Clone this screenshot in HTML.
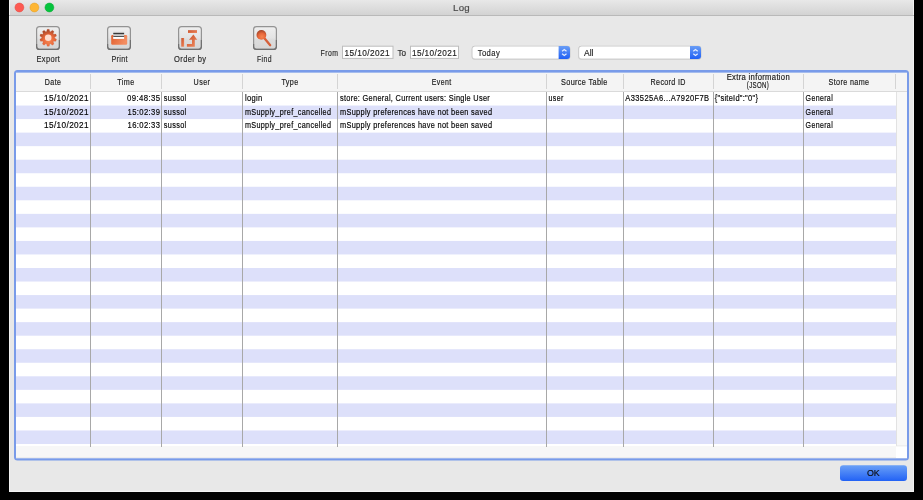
<!DOCTYPE html>
<html><head><meta charset="utf-8"><title>Log</title>
<style>
html,body{margin:0;padding:0;background:#000;width:923px;height:500px;overflow:hidden}
svg{display:block;will-change:transform}
text{font-family:"Liberation Sans",sans-serif;white-space:pre}
</style></head><body>
<svg width="923" height="500" viewBox="0 0 923 500">
<defs>
<linearGradient id="tb" x1="0" y1="0" x2="0" y2="1"><stop offset="0" stop-color="#e8e8e8"/><stop offset="1" stop-color="#d3d3d3"/></linearGradient>
<linearGradient id="ib" x1="0" y1="0" x2="0" y2="1"><stop offset="0" stop-color="#efefef"/><stop offset="0.5" stop-color="#e4e4e4"/><stop offset="0.58" stop-color="#dcdcdc"/><stop offset="1" stop-color="#d6d6d6"/></linearGradient>
<linearGradient id="og" x1="0" y1="0" x2="1" y2="1"><stop offset="0" stop-color="#c9502a"/><stop offset="1" stop-color="#f08a5e"/></linearGradient>
<radialGradient id="gg" cx="0.55" cy="0.7" r="0.65"><stop offset="0" stop-color="#f58450"/><stop offset="0.55" stop-color="#e8683b"/><stop offset="1" stop-color="#a9482a"/></radialGradient>
<linearGradient id="pt" x1="0" y1="0" x2="1" y2="0.3"><stop offset="0" stop-color="#e2602f"/><stop offset="1" stop-color="#f38d61"/></linearGradient>
<linearGradient id="pp" x1="0" y1="0" x2="0" y2="1"><stop offset="0" stop-color="#e6e6e6"/><stop offset="0.3" stop-color="#b8b8b8"/><stop offset="0.6" stop-color="#cfcfcf"/><stop offset="1" stop-color="#dddddd"/></linearGradient>
<linearGradient id="blue" x1="0" y1="0" x2="0" y2="1"><stop offset="0" stop-color="#6a9ef6"/><stop offset="1" stop-color="#1f5ff5"/></linearGradient>
<linearGradient id="okg" x1="0" y1="0" x2="0" y2="1"><stop offset="0" stop-color="#6aa0f7"/><stop offset="1" stop-color="#2262f5"/></linearGradient>
</defs>
<rect width="923" height="500" fill="#000"/>
<rect x="9" y="0" width="905" height="492" fill="#f2f2f2"/>
<rect x="10" y="0" width="903" height="491" fill="#e8e8e8"/>
<rect x="10" y="0" width="903" height="15" fill="url(#tb)"/>
<rect x="9" y="15" width="905" height="1" fill="#b9b9b9"/>
<circle cx="19.4" cy="7.5" r="4.45" fill="#fd5a52" stroke="#e2463f" stroke-width="0.5"/>
<circle cx="34.4" cy="7.5" r="4.45" fill="#feb634" stroke="#e19d22" stroke-width="0.5"/>
<circle cx="49.4" cy="7.5" r="4.45" fill="#05c33d" stroke="#0aa833" stroke-width="0.5"/>
<text transform="translate(453.10,11.20) scale(1.0000,1)" x="0" y="0" font-size="9.7" fill="#4a4a4a" stroke="#4a4a4a" stroke-width="0.18" textLength="16.50" lengthAdjust="spacing" >Log</text>
<rect x="36.6" y="26.6" width="22.8" height="22.8" rx="3" fill="url(#ib)" stroke="#939393" stroke-width="1.2"/>
<path d="M36.6,44 V46.4 Q36.6,49.4 39.6,49.4 H56.4 Q59.4,49.4 59.4,46.4 V40" fill="none" stroke="#707070" stroke-width="1.2"/>
<rect x="107.6" y="26.6" width="22.8" height="22.8" rx="3" fill="url(#ib)" stroke="#939393" stroke-width="1.2"/>
<path d="M107.6,44 V46.4 Q107.6,49.4 110.6,49.4 H127.4 Q130.4,49.4 130.4,46.4 V40" fill="none" stroke="#707070" stroke-width="1.2"/>
<rect x="178.6" y="26.6" width="22.8" height="22.8" rx="3" fill="url(#ib)" stroke="#939393" stroke-width="1.2"/>
<path d="M178.6,44 V46.4 Q178.6,49.4 181.6,49.4 H198.4 Q201.4,49.4 201.4,46.4 V40" fill="none" stroke="#707070" stroke-width="1.2"/>
<rect x="253.6" y="26.6" width="22.8" height="22.8" rx="3" fill="url(#ib)" stroke="#939393" stroke-width="1.2"/>
<path d="M253.6,44 V46.4 Q253.6,49.4 256.6,49.4 H273.4 Q276.4,49.4 276.4,46.4 V40" fill="none" stroke="#707070" stroke-width="1.2"/>
<polygon points="47.18,29.26 49.22,29.26 49.83,31.41 50.58,31.65 52.34,30.27 53.98,31.47 53.22,33.57 53.68,34.20 55.91,34.12 56.54,36.06 54.69,37.31 54.69,38.09 56.54,39.34 55.91,41.28 53.68,41.20 53.22,41.83 53.98,43.93 52.34,45.13 50.58,43.75 49.83,43.99 49.22,46.14 47.18,46.14 46.57,43.99 45.82,43.75 44.06,45.13 42.42,43.93 43.18,41.83 42.72,41.20 40.49,41.28 39.86,39.34 41.71,38.09 41.71,37.31 39.86,36.06 40.49,34.12 42.72,34.20 43.18,33.57 42.42,31.47 44.06,30.27 45.82,31.65 46.57,31.41" fill="url(#gg)" stroke="#d2613a" stroke-width="0.2" stroke-linejoin="round"/>
<circle cx="48.2" cy="37.7" r="3.3" fill="#fddccf"/>
<rect x="111.2" y="35" width="16" height="9.7" rx="1.2" fill="url(#pt)"/>
<rect x="113.3" y="31.4" width="10.8" height="7.4" fill="url(#pp)"/>
<rect x="113.3" y="32.9" width="10.8" height="1.2" fill="#383838"/>
<rect x="113.3" y="36.0" width="10.8" height="0.9" fill="#454545"/>
<rect x="113.3" y="37.0" width="10.8" height="1.8" fill="#ffffff"/>
<rect x="188" y="30.2" width="9" height="2.8" fill="url(#og)"/>
<rect x="181.3" y="38" width="2.8" height="8.7" fill="url(#og)"/>
<path d="M186.9,43.9 H192 V39.7 H189 L193.4,34.4 L197.2,39.7 H194.8 V46.7 H186.9 Z" fill="url(#og)"/>
<line x1="263.8" y1="37.5" x2="270.2" y2="45.2" stroke="#d6603a" stroke-width="2.3" stroke-linecap="round"/>
<circle cx="261.4" cy="34.9" r="4.9" fill="url(#gg)"/>
<text transform="translate(36.50,61.80) scale(0.8275,1)" x="0" y="0" font-size="9" fill="#2b2b2b" stroke="#2b2b2b" stroke-width="0.18" textLength="28.28" lengthAdjust="spacing" >Export</text>
<text transform="translate(111.50,61.80) scale(0.7950,1)" x="0" y="0" font-size="9" fill="#2b2b2b" stroke="#2b2b2b" stroke-width="0.18" textLength="20.13" lengthAdjust="spacing" >Print</text>
<text transform="translate(174.00,61.80) scale(0.8408,1)" x="0" y="0" font-size="9" fill="#2b2b2b" stroke="#2b2b2b" stroke-width="0.18" textLength="38.06" lengthAdjust="spacing" >Order by</text>
<text transform="translate(257.00,61.80) scale(0.7616,1)" x="0" y="0" font-size="9" fill="#2b2b2b" stroke="#2b2b2b" stroke-width="0.18" textLength="19.04" lengthAdjust="spacing" >Find</text>
<text transform="translate(320.60,55.70) scale(0.7623,1)" x="0" y="0" font-size="9" fill="#2b2b2b" stroke="#2b2b2b" stroke-width="0.18" textLength="22.83" lengthAdjust="spacing" >From</text>
<rect x="342.5" y="46.2" width="50.5" height="12.2" fill="#fff" stroke="#bdbdbd" stroke-width="1"/>
<text transform="translate(344.50,55.80) scale(0.8707,1)" x="0" y="0" font-size="9.5" fill="#222" stroke="#222" stroke-width="0.18" textLength="51.68" lengthAdjust="spacing" >15/10/2021</text>
<text transform="translate(397.40,55.70) scale(0.9038,1)" x="0" y="0" font-size="9" fill="#2b2b2b" stroke="#2b2b2b" stroke-width="0.18" textLength="9.52" lengthAdjust="spacing" >To</text>
<rect x="410.5" y="46.2" width="48" height="12.2" fill="#fff" stroke="#bdbdbd" stroke-width="1"/>
<text transform="translate(412.00,55.80) scale(0.8649,1)" x="0" y="0" font-size="9.5" fill="#222" stroke="#222" stroke-width="0.18" textLength="51.68" lengthAdjust="spacing" >15/10/2021</text>
<rect x="471.7" y="45.8" width="98.6" height="13.6" rx="3.2" fill="#c2c2c2"/>
<rect x="471.7" y="46.4" width="98.6" height="13.2" rx="3.2" fill="#d0d0d0"/>
<rect x="472.6" y="46.6" width="96.8" height="11.9" rx="2.5" fill="#fff"/>
<path d="M558.6,45.9 H567 Q570,45.9 570,48.9 V56 Q570,59 567,59 H558.6 Z" fill="url(#blue)"/>
<path d="M562.0999999999999,51.3 L564.3,49.5 L566.5,51.3 M562.0999999999999,53.7 L564.3,55.5 L566.5,53.7" fill="none" stroke="#e3ecff" stroke-width="1.2"/>
<text transform="translate(477.70,55.90) scale(0.8018,1)" x="0" y="0" font-size="9.5" fill="#262626" stroke="#262626" stroke-width="0.18" textLength="27.56" lengthAdjust="spacing" >Today</text>
<rect x="578.3000000000001" y="45.8" width="122.99999999999997" height="13.6" rx="3.2" fill="#c2c2c2"/>
<rect x="578.3000000000001" y="46.4" width="122.99999999999997" height="13.2" rx="3.2" fill="#d0d0d0"/>
<rect x="579.2" y="46.6" width="121.19999999999997" height="11.9" rx="2.5" fill="#fff"/>
<path d="M690,45.9 H698 Q701,45.9 701,48.9 V56 Q701,59 698,59 H690 Z" fill="url(#blue)"/>
<path d="M693.3,51.3 L695.5,49.5 L697.7,51.3 M693.3,53.7 L695.5,55.5 L697.7,53.7" fill="none" stroke="#e3ecff" stroke-width="1.2"/>
<text transform="translate(584.00,55.90) scale(0.8994,1)" x="0" y="0" font-size="9.5" fill="#262626" stroke="#262626" stroke-width="0.18" textLength="10.56" lengthAdjust="spacing" >All</text>
<rect x="14" y="70" width="895" height="390.5" rx="3.5" fill="#799be9"/>
<rect x="16" y="72.8" width="891" height="385.5" fill="#f8f8f8"/>
<rect x="16" y="72.8" width="891" height="18.2" fill="#f4f4f4"/>
<rect x="16" y="91" width="891" height="1" fill="#dadada"/>
<rect x="16" y="92" width="880" height="354" fill="#ffffff"/>
<defs><pattern id="rows" x="16" y="92" width="10" height="27.0769" patternUnits="userSpaceOnUse"><rect width="10" height="13.5385" fill="#ffffff"/><rect y="13.5385" width="10" height="13.5385" fill="#dde0fa"/></pattern></defs>
<rect x="16" y="92" width="880" height="352" fill="url(#rows)"/>
<rect x="16" y="446" width="880" height="12" fill="#f7f7f7"/>
<rect x="16" y="457" width="880" height="1" fill="#ededed"/>
<rect x="896" y="92" width="11" height="354" fill="#f8f8f8"/>
<rect x="896" y="92" width="1" height="354" fill="#e2e2e2"/>
<rect x="896" y="445.5" width="11" height="1" fill="#e6e6e6"/>
<rect x="896" y="446.5" width="11" height="11.5" fill="#ffffff"/>
<rect x="90" y="74" width="1" height="15" fill="#d4d4d4"/>
<rect x="90" y="92" width="1" height="355" fill="#a8a8a8"/>
<rect x="161" y="74" width="1" height="15" fill="#d4d4d4"/>
<rect x="161" y="92" width="1" height="355" fill="#a8a8a8"/>
<rect x="242" y="74" width="1" height="15" fill="#d4d4d4"/>
<rect x="242" y="92" width="1" height="355" fill="#a8a8a8"/>
<rect x="337" y="74" width="1" height="15" fill="#d4d4d4"/>
<rect x="337" y="92" width="1" height="355" fill="#a8a8a8"/>
<rect x="546" y="74" width="1" height="15" fill="#d4d4d4"/>
<rect x="546" y="92" width="1" height="355" fill="#a8a8a8"/>
<rect x="623" y="74" width="1" height="15" fill="#d4d4d4"/>
<rect x="623" y="92" width="1" height="355" fill="#a8a8a8"/>
<rect x="713" y="74" width="1" height="15" fill="#d4d4d4"/>
<rect x="713" y="92" width="1" height="355" fill="#a8a8a8"/>
<rect x="803" y="74" width="1" height="15" fill="#d4d4d4"/>
<rect x="803" y="92" width="1" height="355" fill="#a8a8a8"/>
<rect x="895" y="74" width="1" height="15" fill="#d4d4d4"/>
<text transform="translate(44.80,85.00) scale(0.8617,1)" x="0" y="0" font-size="8.2" fill="#1c1c1c" stroke="#1c1c1c" stroke-width="0.18" textLength="18.80" lengthAdjust="spacing" >Date</text>
<text transform="translate(117.20,85.00) scale(0.8742,1)" x="0" y="0" font-size="8.2" fill="#1c1c1c" stroke="#1c1c1c" stroke-width="0.18" textLength="19.45" lengthAdjust="spacing" >Time</text>
<text transform="translate(193.60,85.00) scale(0.8723,1)" x="0" y="0" font-size="8.2" fill="#1c1c1c" stroke="#1c1c1c" stroke-width="0.18" textLength="18.80" lengthAdjust="spacing" >User</text>
<text transform="translate(281.40,85.00) scale(0.8759,1)" x="0" y="0" font-size="8.2" fill="#1c1c1c" stroke="#1c1c1c" stroke-width="0.18" textLength="19.29" lengthAdjust="spacing" >Type</text>
<text transform="translate(431.80,85.00) scale(0.8480,1)" x="0" y="0" font-size="8.2" fill="#1c1c1c" stroke="#1c1c1c" stroke-width="0.18" textLength="22.76" lengthAdjust="spacing" >Event</text>
<text transform="translate(561.00,85.00) scale(0.8960,1)" x="0" y="0" font-size="8.2" fill="#1c1c1c" stroke="#1c1c1c" stroke-width="0.18" textLength="51.78" lengthAdjust="spacing" >Source Table</text>
<text transform="translate(650.60,85.00) scale(0.8686,1)" x="0" y="0" font-size="8.2" fill="#1c1c1c" stroke="#1c1c1c" stroke-width="0.18" textLength="40.06" lengthAdjust="spacing" >Record ID</text>
<text transform="translate(726.70,80.20) scale(0.9365,1)" x="0" y="0" font-size="8.2" fill="#1c1c1c" stroke="#1c1c1c" stroke-width="0.18" textLength="67.27" lengthAdjust="spacing" >Extra information</text>
<text transform="translate(746.80,88.30) scale(0.7448,1)" x="0" y="0" font-size="8.2" fill="#1c1c1c" stroke="#1c1c1c" stroke-width="0.18" textLength="29.67" lengthAdjust="spacing" >(JSON)</text>
<text transform="translate(828.60,85.00) scale(0.8781,1)" x="0" y="0" font-size="8.2" fill="#1c1c1c" stroke="#1c1c1c" stroke-width="0.18" textLength="46.01" lengthAdjust="spacing" >Store name</text>
<text transform="translate(44.00,101.40) scale(0.8923,1)" x="0" y="0" font-size="9.2" fill="#050505" stroke="#050505" stroke-width="0.18" textLength="49.98" lengthAdjust="spacing" >15/10/2021</text>
<text transform="translate(127.00,101.40) scale(0.8489,1)" x="0" y="0" font-size="9.2" fill="#050505" stroke="#050505" stroke-width="0.18" textLength="38.88" lengthAdjust="spacing" >09:48:35</text>
<text transform="translate(163.70,101.40) scale(0.7947,1)" x="0" y="0" font-size="9.2" fill="#050505" stroke="#050505" stroke-width="0.18" textLength="28.31" lengthAdjust="spacing" >sussol</text>
<text transform="translate(244.90,101.40) scale(0.8195,1)" x="0" y="0" font-size="9.2" fill="#050505" stroke="#050505" stroke-width="0.18" textLength="21.11" lengthAdjust="spacing" >login</text>
<text transform="translate(340.00,101.40) scale(0.8032,1)" x="0" y="0" font-size="9.2" fill="#050505" stroke="#050505" stroke-width="0.18" textLength="186.50" lengthAdjust="spacing" >store: General, Current users: Single User</text>
<text transform="translate(548.50,101.40) scale(0.7669,1)" x="0" y="0" font-size="9.2" fill="#050505" stroke="#050505" stroke-width="0.18" textLength="19.43" lengthAdjust="spacing" >user</text>
<text transform="translate(625.30,101.40) scale(0.8202,1)" x="0" y="0" font-size="9.2" fill="#050505" stroke="#050505" stroke-width="0.18" textLength="102.17" lengthAdjust="spacing" >A33525A6...A7920F7B</text>
<text transform="translate(714.70,101.40) scale(0.8142,1)" x="0" y="0" font-size="9.2" fill="#050505" stroke="#050505" stroke-width="0.18" textLength="53.06" lengthAdjust="spacing" >{&quot;siteId&quot;:&quot;0&quot;}</text>
<text transform="translate(805.60,101.40) scale(0.7627,1)" x="0" y="0" font-size="9.2" fill="#050505" stroke="#050505" stroke-width="0.18" textLength="35.53" lengthAdjust="spacing" >General</text>
<text transform="translate(44.00,114.94) scale(0.8923,1)" x="0" y="0" font-size="9.2" fill="#050505" stroke="#050505" stroke-width="0.18" textLength="49.98" lengthAdjust="spacing" >15/10/2021</text>
<text transform="translate(127.60,114.94) scale(0.8334,1)" x="0" y="0" font-size="9.2" fill="#050505" stroke="#050505" stroke-width="0.18" textLength="38.88" lengthAdjust="spacing" >15:02:39</text>
<text transform="translate(163.70,114.94) scale(0.7947,1)" x="0" y="0" font-size="9.2" fill="#050505" stroke="#050505" stroke-width="0.18" textLength="28.31" lengthAdjust="spacing" >sussol</text>
<text transform="translate(244.90,114.94) scale(0.7872,1)" x="0" y="0" font-size="9.2" fill="#050505" stroke="#050505" stroke-width="0.18" textLength="109.38" lengthAdjust="spacing" >mSupply_pref_cancelled</text>
<text transform="translate(340.00,114.94) scale(0.8005,1)" x="0" y="0" font-size="9.2" fill="#050505" stroke="#050505" stroke-width="0.18" textLength="189.88" lengthAdjust="spacing" >mSupply preferences have not been saved</text>
<text transform="translate(805.60,114.94) scale(0.7627,1)" x="0" y="0" font-size="9.2" fill="#050505" stroke="#050505" stroke-width="0.18" textLength="35.53" lengthAdjust="spacing" >General</text>
<text transform="translate(44.00,128.48) scale(0.8923,1)" x="0" y="0" font-size="9.2" fill="#050505" stroke="#050505" stroke-width="0.18" textLength="49.98" lengthAdjust="spacing" >15/10/2021</text>
<text transform="translate(127.60,128.48) scale(0.8334,1)" x="0" y="0" font-size="9.2" fill="#050505" stroke="#050505" stroke-width="0.18" textLength="38.88" lengthAdjust="spacing" >16:02:33</text>
<text transform="translate(163.70,128.48) scale(0.7947,1)" x="0" y="0" font-size="9.2" fill="#050505" stroke="#050505" stroke-width="0.18" textLength="28.31" lengthAdjust="spacing" >sussol</text>
<text transform="translate(244.90,128.48) scale(0.7872,1)" x="0" y="0" font-size="9.2" fill="#050505" stroke="#050505" stroke-width="0.18" textLength="109.38" lengthAdjust="spacing" >mSupply_pref_cancelled</text>
<text transform="translate(340.00,128.48) scale(0.8005,1)" x="0" y="0" font-size="9.2" fill="#050505" stroke="#050505" stroke-width="0.18" textLength="189.88" lengthAdjust="spacing" >mSupply preferences have not been saved</text>
<text transform="translate(805.60,128.48) scale(0.7627,1)" x="0" y="0" font-size="9.2" fill="#050505" stroke="#050505" stroke-width="0.18" textLength="35.53" lengthAdjust="spacing" >General</text>
<rect x="840" y="465.3" width="67" height="15.6" rx="3.2" fill="url(#okg)"/>
<text transform="translate(866.90,476.20) scale(0.9526,1)" x="0" y="0" font-size="9.3" fill="#0d0d12" stroke="#0d0d12" stroke-width="0.18" textLength="13.44" lengthAdjust="spacing" >OK</text>
</svg>
</body></html>
